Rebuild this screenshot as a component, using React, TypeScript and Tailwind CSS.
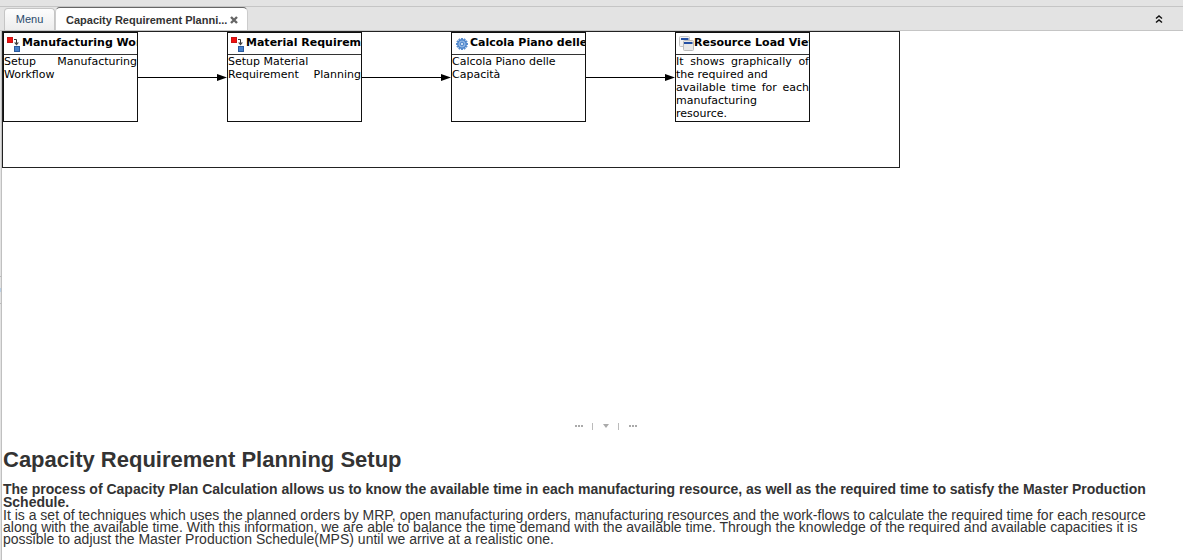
import React from "react";

type IconName = "workflow" | "process" | "window";
type Line = { text: string; justify?: boolean };
type Step = { title: string; icon: IconName; lines: Line[] };

const steps: Step[] = [
  {
    title: "Manufacturing Workflow",
    icon: "workflow",
    lines: [{ text: "Setup Manufacturing", justify: true }, { text: "Workflow" }],
  },
  {
    title: "Material Requirement Planning",
    icon: "workflow",
    lines: [{ text: "Setup Material" }, { text: "Requirement Planning", justify: true }],
  },
  {
    title: "Calcola Piano delle Capacità",
    icon: "process",
    lines: [{ text: "Calcola Piano delle" }, { text: "Capacità" }],
  },
  {
    title: "Resource Load View",
    icon: "window",
    lines: [
      { text: "It shows graphically of", justify: true },
      { text: "the required and" },
      { text: "available time for each", justify: true },
      { text: "manufacturing" },
      { text: "resource." },
    ],
  },
];

const teeth = [0, 30, 60, 90, 120, 150, 180, 210, 240, 270, 300, 330];

function StepIcon({ name }: { name: IconName }) {
  if (name === "workflow") {
    return (
      <svg viewBox="0 0 16 16" className="h-4 w-4 shrink-0" aria-hidden="true">
        <rect x="1" y="1" width="6" height="6" fill="#c81414" />
        <rect x="2" y="2" width="4" height="4" fill="#f01010" />
        <path d="M8 3.5h2.5v4" fill="none" stroke="#333" />
        <path d="M8 6.5h5L10.5 9.5z" fill="#444" />
        <rect x="8" y="10" width="6" height="6" fill="#2a5a9c" />
        <rect x="9" y="11" width="4" height="4" fill="#4680ca" />
      </svg>
    );
  }
  if (name === "process") {
    return (
      <svg viewBox="0 0 16 16" className="h-4 w-4 shrink-0" aria-hidden="true">
        {teeth.map((a) => (
          <rect key={a} x="7" y="2" width="2" height="3" fill="#5b8fd0" transform={`rotate(${a} 8 8)`} />
        ))}
        <circle cx="8" cy="8" r="4.2" fill="#94b9e6" stroke="#4a82c8" strokeWidth="1.2" />
        <circle cx="8" cy="8" r="1.8" fill="#c9dcf3" stroke="#4a82c8" />
      </svg>
    );
  }
  return (
    <svg viewBox="0 0 16 16" className="h-4 w-4 shrink-0" aria-hidden="true">
      <rect x="1.5" y="0.5" width="10" height="10" rx="1" fill="#f2f2f2" stroke="#c4c4c4" />
      <path d="M3 3h7.500" stroke="#2450a4" strokeWidth="2" />
      <rect x="5.5" y="4.5" width="10" height="10" rx="1" fill="#e8e8e8" stroke="#bcbcbc" />
      <path d="M6 7h8.500" stroke="#2450a4" strokeWidth="2" />
    </svg>
  );
}

function StepNode({ step }: { step: Step }) {
  return (
    <article className="h-[90px] w-[135px] shrink-0 overflow-hidden border border-[#111] bg-white text-black">
      <h2 className="flex h-[22px] items-center overflow-hidden border-b border-[#333] pl-[2px] text-[11px] font-bold whitespace-nowrap">
        <StepIcon name={step.icon} />
        <span>{step.title}</span>
      </h2>
      <p className="text-[11px] leading-[13px]">
        {step.lines.map((line) => (
          <span
            key={line.text}
            className={line.justify ? "block [text-align-last:justify]" : "block"}
          >
            {line.text}
          </span>
        ))}
      </p>
    </article>
  );
}

function Connector() {
  return (
    <svg viewBox="0 0 89 8" className="mt-[41px] h-2 w-[89px] shrink-0" aria-hidden="true">
      <path d="M0 4.5h82" stroke="#000" />
      <path d="M79 1l10 3.5L79 8z" fill="#000" />
    </svg>
  );
}

export default function App() {
  return (
    <div className="flex min-h-screen flex-col bg-white font-['Liberation_Sans',Arial,sans-serif] text-[#333]">
      <div className="h-[7px] border-b border-[#c5c5c5] bg-[#e3e3e3]" />
      <header className="flex h-6 items-end justify-between border-b border-[#c5c5c5] bg-[#e3e3e3] pr-[18px] pl-1 text-[11px]">
        <nav className="flex items-end" aria-label="Open windows">
          <button className="h-[22px] w-[51px] rounded-t border border-b-0 border-[#c5c5c5] bg-linear-to-b from-[#fdfdfd] to-[#ededed] text-[#294a6b]">
            Menu
          </button>
          <div className="flex h-[23px] w-[193px] items-center rounded-t-[5px] border border-b-0 border-t-[#666] border-r-[#ccc] border-l-[#ccc] bg-white pt-[2px] pl-[10px]">
            <button className="font-bold whitespace-nowrap">Capacity Requirement Planni...</button>
            <button className="ml-[3px]" aria-label="Close tab">
              <svg viewBox="0 0 8 8" className="h-2 w-2" aria-hidden="true">
                <path d="M1 1l6 6M7 1L1 7" stroke="#666" strokeWidth="2.4" />
              </svg>
            </button>
          </div>
        </nav>
        <button className="mb-[6px]" aria-label="Collapse header">
          <svg viewBox="0 0 12 10" className="h-[10px] w-3" aria-hidden="true">
            <path d="M3 4.5l3-2.5 3 2.5M3 8.5L6 6l3 2.5" fill="none" stroke="#111" strokeWidth="1.5" />
          </svg>
        </button>
      </header>
      <div className="flex grow">
        <div className="flex w-[2px] shrink-0 flex-col justify-center border-r border-[#c0c0c0] bg-[#e3e3e3]">
          <div className="mb-3 h-7 border-y border-[#bbb] py-[11px]">
            <div className="h-full bg-[#b8cfe5]" />
          </div>
        </div>
        <main className="min-w-0 grow">
          <section
            aria-label="Workflow"
            className="flex h-[137px] w-[898px] items-start border border-[#222] font-['DejaVu_Sans',Verdana,sans-serif]"
          >
            {steps.map((step, i) => (
              <React.Fragment key={step.title}>
                {i > 0 && <Connector />}
                <StepNode step={step} />
              </React.Fragment>
            ))}
          </section>
          <div className="mt-[254px] flex h-2 items-center justify-center pl-[26px]">
            <svg viewBox="0 0 64 8" className="h-2 w-16" aria-hidden="true">
              <path d="M1 4h8M55 4h8" stroke="#aaa" strokeWidth="2" strokeDasharray="2 1" />
              <path d="M18.5 1v7M44.5 1v7" stroke="#bbb" />
              <path d="M29 2h6l-3 4z" fill="#aaa" />
            </svg>
          </div>
          <section className="pt-[17px] pr-2 pl-px text-[14px]">
            <h1 className="text-[22px] leading-[26px] font-bold">Capacity Requirement Planning Setup</h1>
            <p className="mt-[10px] leading-[13px] font-bold">
              The process of Capacity Plan Calculation allows us to know the available time in each
              manufacturing resource, as well as the required time to satisfy the Master Production
              Schedule.
            </p>
            <p className="leading-[12px]">
              It is a set of techniques which uses the planned orders by MRP, open manufacturing
              orders, manufacturing resources and the work-flows to calculate the required time for
              each resource along with the available time. With this information, we are able to
              balance the time demand with the available time. Through the knowledge of the required
              and available capacities it is possible to adjust the Master Production Schedule(MPS)
              until we arrive at a realistic one.
            </p>
          </section>
        </main>
      </div>
    </div>
  );
}
